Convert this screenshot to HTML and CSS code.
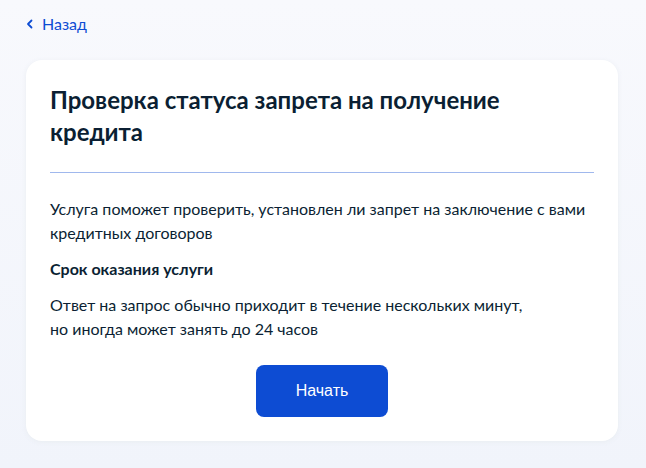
FILE: index.html
```html
<!DOCTYPE html>
<html lang="ru">
<head>
    <meta charset="utf-8">
    <title>Проверка статуса запрета на получение кредита</title>
    <link rel="stylesheet" href="styles.css">
</head>
<body>
    <div class="page">
        <a href="#" class="back-link">
            <svg class="back-icon" width="8" height="10" viewBox="0 0 8 10">
                <path d="M5.5 1.5 L2 5 L5.5 8.5" fill="none" stroke="#0d4cd3" stroke-width="1.8" stroke-linecap="round" stroke-linejoin="round"/>
            </svg>
            Назад
        </a>

        <div class="card">
            <h1 class="card-title">Проверка статуса запрета на получение кредита</h1>
            <hr class="divider">
            <p class="text">Услуга поможет проверить, установлен ли запрет на заключение с вами кредитных договоров</p>
            <h2 class="subtitle">Срок оказания услуги</h2>
            <p class="text">Ответ на запрос обычно приходит в течение нескольких минут,<br>но иногда может занять до 24 часов</p>
            <div class="actions">
                <button class="btn-primary">Начать</button>
            </div>
        </div>
    </div>
</body>
</html>
```

FILE: styles.css
```css
html, body {
    margin: 0;
    padding: 0;
}

body {
    font-family: Lato, "Noto Sans", sans-serif;
    background: linear-gradient(180deg, #f8f9fd 0%, #f1f4fb 100%);
    color: #0b1f33;
    min-height: 468px;
}

.page {
    padding: 12px 28px 0 26px;
}

.back-link {
    display: inline-flex;
    align-items: center;
    gap: 8px;
    color: #0d4cd3;
    font-size: 16px;
    line-height: 24px;
    text-decoration: none;
}

.back-icon {
    display: block;
}

.card {
    margin-top: 24px;
    background: #fff;
    border-radius: 16px;
    padding: 24px 24px 24px 24px;
    box-shadow: 0 1px 4px rgba(232, 236, 241, 0.9);
}

.card-title {
    margin: 0;
    font-size: 24px;
    line-height: 32px;
    font-weight: 700;
    max-width: 480px;
}

.divider {
    border: 0;
    height: 1px;
    background: #a0b8ed;
    margin: 24px 0 24px 0;
}

.text {
    margin: 0 0 12px;
    font-size: 16px;
    line-height: 24px;
}

.subtitle {
    margin: 0 0 12px;
    font-size: 16px;
    line-height: 24px;
    font-weight: 700;
}

.actions {
    display: flex;
    justify-content: center;
    margin-top: 24px;
}

.btn-primary {
    width: 132px;
    height: 52px;
    border: 0;
    border-radius: 8px;
    background: #0d4cd3;
    color: #fff;
    font-family: "Liberation Sans", Arial, sans-serif;
    font-size: 16px;
    cursor: pointer;
}
```
